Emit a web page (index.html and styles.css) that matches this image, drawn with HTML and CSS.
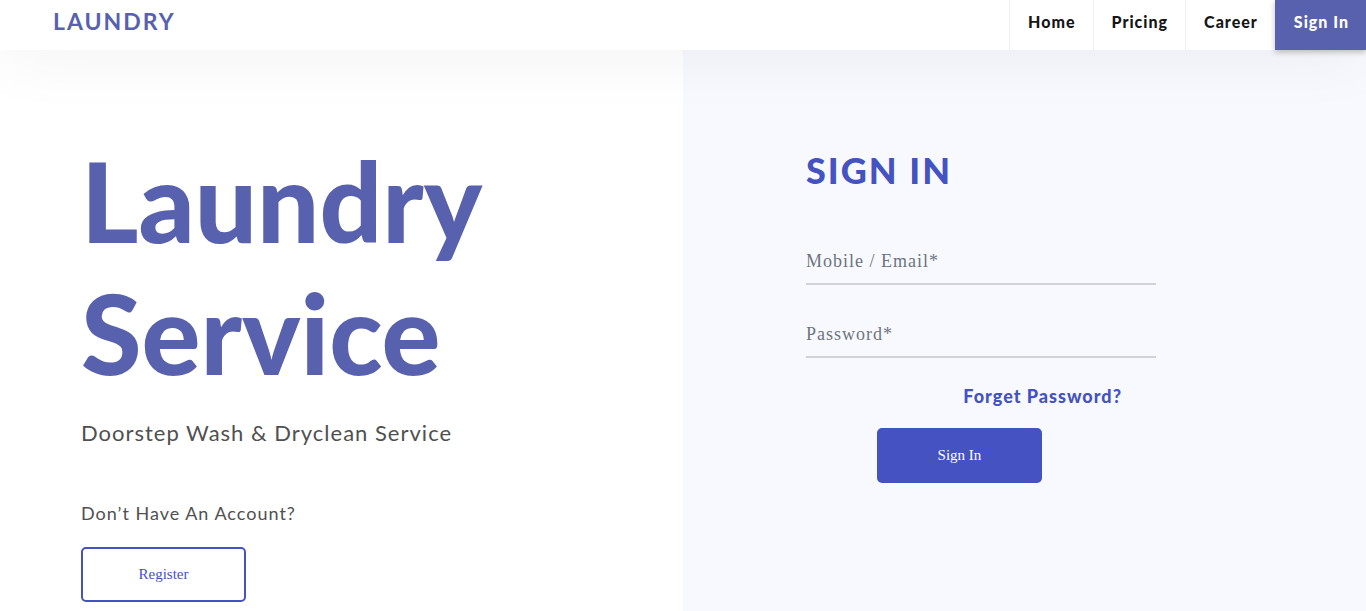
FILE: index.html
```html
<!DOCTYPE html>
<html lang="en">
<head>
<meta charset="utf-8">
<meta name="viewport" content="width=device-width, initial-scale=1">
<title>Laundry Service</title>
<link rel="stylesheet" href="styles.css">
</head>
<body>
<header class="topbar">
  <a class="brand" href="#">LAUNDRY</a>
  <nav class="nav">
    <a class="nav-link" href="#">Home</a>
    <a class="nav-link" href="#">Pricing</a>
    <a class="nav-link" href="#">Career</a>
    <a class="nav-link nav-active" href="#">Sign In</a>
  </nav>
</header>
<main class="split">
  <section class="intro">
    <h1 class="title">Laundry<br>Service</h1>
    <p class="tagline">Doorstep Wash &amp; Dryclean Service</p>
    <p class="question">Don’t Have An Account?</p>
    <button class="btn btn-outline" type="button">Register</button>
  </section>
  <section class="signin">
    <form class="form">
      <h2 class="form-title">SIGN IN</h2>
      <input class="field" type="text" placeholder="Mobile / Email*" aria-label="Mobile / Email">
      <input class="field" type="password" placeholder="Password*" aria-label="Password">
      <a class="forgot" href="#">Forget Password?</a>
      <button class="btn btn-solid" type="button">Sign In</button>
    </form>
  </section>
</main>
</body>
</html>
```
FILE: styles.css
```css
* {
  box-sizing: border-box;
}

body {
  margin: 0;
  min-height: 100vh;
  display: flex;
  flex-direction: column;
  background: #fff;
  color: #505050;
  font-family: Lato, "Open Sans", sans-serif;
}

a {
  text-decoration: none;
}

.topbar {
  position: relative;
  z-index: 1;
  display: flex;
  justify-content: space-between;
  height: 50px;
  padding-left: 53px;
  background: #fff;
  box-shadow: 0 0 70px rgba(0, 0, 0, 0.07);
}

.brand {
  color: #5861ae;
  font-size: 23px;
  font-weight: 700;
  line-height: 42px;
  letter-spacing: 2px;
}

.nav {
  display: flex;
}

.nav-link {
  padding: 0 17px 0 18px;
  border-left: 1px solid #f0f0f2;
  color: #161616;
  font-size: 16px;
  font-weight: 900;
  line-height: 43px;
  letter-spacing: 1px;
}

.nav-active {
  border-left-color: #5861ae;
  background: #5861ae;
  color: #fff;
  box-shadow: 0 2px 6px rgba(0, 0, 0, 0.25);
}

.split {
  flex: 1;
  display: grid;
  grid-template-columns: 1fr 1fr;
}

.intro {
  padding: 84px 24px 9px 81px;
}

.title {
  margin: 0;
  color: #5861ae;
  font-size: 110px;
  font-weight: 900;
  line-height: 132px;
}

.tagline {
  margin: 20px 0 0;
  font-size: 22px;
  line-height: 30px;
  letter-spacing: 1px;
}

.question {
  margin: 52px 0 21px;
  font-size: 18px;
  line-height: 26px;
  letter-spacing: 1px;
}

.btn {
  display: block;
  width: 165px;
  height: 55px;
  border: 2px solid #4552c1;
  border-radius: 5px;
  font-family: "Liberation Serif", serif;
  font-size: 15px;
}

.btn-outline {
  background: #fff;
  color: #4552c1;
}

.btn-solid {
  margin-left: 71px;
  background: #4552c1;
  color: #fff;
}

.signin {
  padding: 98px 24px 24px 123px;
  background: #f8f9ff;
}

.form {
  display: flex;
  flex-direction: column;
  max-width: 350px;
}

.form-title {
  margin: 0 0 47px;
  color: #4552c1;
  font-size: 36px;
  font-weight: 900;
  line-height: 44px;
  letter-spacing: 2px;
}

.field {
  width: 100%;
  height: 46px;
  margin-bottom: 27px;
  padding: 0;
  border: 0;
  border-bottom: 2px solid #ced4da;
  outline: 0;
  background: transparent;
  color: #505050;
  font-family: "Liberation Serif", serif;
  font-size: 18px;
  letter-spacing: 1px;
}

.field::placeholder {
  color: #6c757d;
  opacity: 1;
}

.forgot {
  align-self: flex-end;
  margin-right: 34px;
  margin-bottom: 21px;
  color: #4552c1;
  font-size: 18px;
  font-weight: 900;
  line-height: 22px;
  letter-spacing: 1px;
}
```
